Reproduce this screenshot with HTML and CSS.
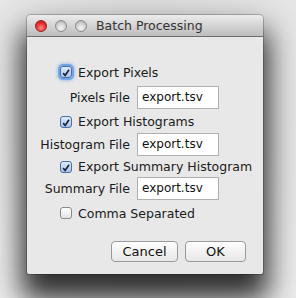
FILE: index.html
```html
<!DOCTYPE html>
<html>
<head>
<meta charset="utf-8">
<link rel="stylesheet" href="styles.css">
</head>
<body>
<div class="desk">
  <div class="window">
    <div class="titlebar">
      <span class="light red"></span>
      <span class="light gray"></span>
      <span class="light gray"></span>
      <span class="title">Batch Processing</span>
    </div>
    <div class="content">
      <div class="row check-row r1">
        <span class="cb checked focus"><svg viewBox="0 0 12 12" width="12" height="12"><path d="M2.6 6.2 L5 9 L9.6 2.2" fill="none" stroke="#16223e" stroke-width="2"/></svg></span>
        <span class="cb-label">Export Pixels</span>
      </div>
      <div class="row field-row f1">
        <span class="flabel">Pixels File</span>
        <span class="input">export.tsv</span>
      </div>
      <div class="row check-row r2">
        <span class="cb checked"><svg viewBox="0 0 12 12" width="12" height="12"><path d="M2.6 6.2 L5 9 L9.6 2.2" fill="none" stroke="#16223e" stroke-width="2"/></svg></span>
        <span class="cb-label">Export Histograms</span>
      </div>
      <div class="row field-row f2">
        <span class="flabel">Histogram File</span>
        <span class="input">export.tsv</span>
      </div>
      <div class="row check-row r3">
        <span class="cb checked"><svg viewBox="0 0 12 12" width="12" height="12"><path d="M2.6 6.2 L5 9 L9.6 2.2" fill="none" stroke="#16223e" stroke-width="2"/></svg></span>
        <span class="cb-label">Export Summary Histogram</span>
      </div>
      <div class="row field-row f3">
        <span class="flabel">Summary File</span>
        <span class="input">export.tsv</span>
      </div>
      <div class="row check-row r4">
        <span class="cb"></span>
        <span class="cb-label">Comma Separated</span>
      </div>
      <div class="buttons">
        <span class="btn cancel">Cancel</span>
        <span class="btn ok">OK</span>
      </div>
    </div>
  </div>
</div>
</body>
</html>
```
FILE: styles.css
```css
html, body {
  margin: 0;
  padding: 0;
}
body {
  width: 296px;
  height: 298px;
  overflow: hidden;
  background: radial-gradient(ellipse at 50% 35%, #cfcfcf 0%, #e0e0e0 60%, #ebebeb 100%);
  font-family: "DejaVu Sans", "Liberation Sans", sans-serif;
  color: #1a1a1a;
}
.desk {
  padding: 15px 0 0 27px;
}
.window {
  width: 236px;
  height: 259px;
  background: #e8e8e8;
  border-radius: 4px 4px 2px 2px;
  box-shadow: 0 20px 28px 5px rgba(0,0,0,0.8), 0 0 0 1px rgba(0,0,0,0.22);
  overflow: hidden;
}
.titlebar {
  height: 21px;
  border-bottom: 1px solid #6e6e6e;
  background: linear-gradient(#ececec, #d4d4d4 50%, #bdbdbd);
  display: flex;
  align-items: center;
  padding-left: 8px;
  border-radius: 4px 4px 0 0;
}
.light {
  width: 12px;
  height: 12px;
  border-radius: 50%;
  margin-right: 8px;
  box-sizing: border-box;
}
.light.red {
  background: radial-gradient(circle at 50% 70%, #ff8a8a 0%, #e8302b 55%, #a01010 100%);
  border: 1px solid #9a2020;
}
.light.gray {
  background: radial-gradient(circle at 50% 70%, #f4f4f4 0%, #d0d0d0 55%, #a4a4a4 100%);
  border: 1px solid #8c8c8c;
}
.title {
  margin-left: 1px;
  font-size: 12.5px;
  color: #333;
}
.content {
  padding-top: 25px;
  font-size: 12.5px;
}
.row {
  display: flex;
  align-items: center;
}
.check-row {
  padding-left: 33px;
  height: 22px;
}
.cb {
  width: 12px;
  height: 12px;
  box-sizing: border-box;
  border: 1px solid #8a8a8a;
  border-radius: 3px;
  background: linear-gradient(#ffffff, #e4e4e4);
  display: flex;
  margin-right: 6px;
}
.cb.checked {
  border-color: #4b6ea4;
  background: linear-gradient(#dfeaf8, #a9c4e8);
}
.cb.focus {
  box-shadow: 0 0 0 2px rgba(90,150,230,0.7), 0 0 3px 3px rgba(110,165,235,0.5);
}
.cb svg {
  display: block;
}
.field-row {
  height: 24px;
}
.flabel {
  width: 103px;
  text-align: right;
  margin-right: 7px;
}
.input {
  width: 82px;
  height: 23px;
  box-sizing: border-box;
  background: #fff;
  border: 1px solid #b0b0b0;
  font-size: 12px;
  padding-left: 4px;
  line-height: 21px;
  color: #111;
}
.r1 { height: 20px; }
.f1 { margin-top: 3px; }
.r2 { margin-top: 2px; height: 21px; }
.f2 { margin-top: 0; }
.r3 { margin-top: 1px; height: 19px; }
.r4 { margin-top: 2px; }
.buttons {
  display: flex;
  justify-content: flex-end;
  padding-right: 17px;
  margin-top: 17px;
}
.btn {
  height: 21px;
  box-sizing: border-box;
  border: 1px solid #9a9a9a;
  border-radius: 4px;
  background: linear-gradient(#fefefe, #f2f2f2 50%, #e8e8e8);
  display: flex;
  align-items: center;
  justify-content: center;
  font-size: 13px;
  color: #111;
}
.cancel { width: 67px; margin-right: 7px; }
.ok { width: 61px; }
```
